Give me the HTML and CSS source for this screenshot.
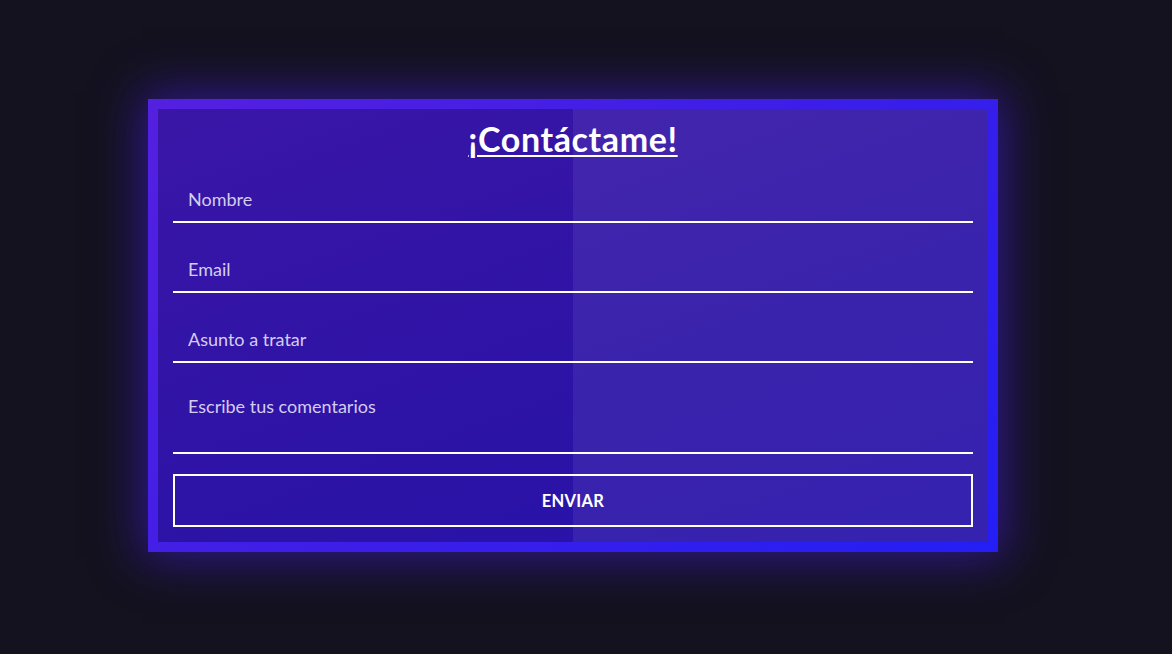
FILE: index.html
```html
<!DOCTYPE html>
<html lang="es">
<head>
<meta charset="utf-8">
<title>Contacto</title>
<link rel="stylesheet" href="styles.css">
</head>
<body>
<main class="page">
  <div class="frame">
    <form class="card">
      <h1 class="title">¡Contáctame!</h1>
      <input class="field" type="text" placeholder="Nombre">
      <input class="field" type="email" placeholder="Email">
      <input class="field" type="text" placeholder="Asunto a tratar">
      <textarea class="field area" placeholder="Escribe tus comentarios"></textarea>
      <button class="send" type="button">ENVIAR</button>
    </form>
  </div>
</main>
</body>
</html>
```
FILE: styles.css
```css
* { box-sizing: border-box; }
html, body { margin: 0; height: 100%; }
body {
  background: #14121f;
  font-family: "Lato", "Open Sans", sans-serif;
  overflow: hidden;
}
.page {
  padding: 99px 0 0 148px;
}
.frame {
  width: 850px;
  padding: 10px;
  background: linear-gradient(135deg, #5420e0 0%, #3d1ee8 50%, #241ef5 100%);
  box-shadow: 0 0 45px 6px rgba(70, 30, 230, 0.55);
}
.card {
  position: relative;
  display: flex;
  flex-direction: column;
  padding: 10px 15px 15px;
  background: linear-gradient(160deg, #3a16a6 0%, #2c13a6 60%, #2512aa 100%);
}
.card::after {
  content: "";
  position: absolute;
  top: 0; right: 0; bottom: 0;
  width: 50%;
  background: rgba(255, 255, 255, 0.07);
  pointer-events: none;
}
.title {
  margin: 0 0 13px;
  font-size: 34px;
  line-height: 40px;
  font-weight: 700;
  letter-spacing: 0.6px;
  color: #fff;
  text-align: center;
  text-decoration: underline;
  text-decoration-thickness: 2px;
  text-underline-offset: 3px;
}
.field {
  display: block;
  width: 100%;
  height: 51px;
  margin: 0 0 19px;
  padding: 4px 15px 0;
  background: transparent;
  border: 0;
  border-bottom: 2px solid #fff;
  color: #fff;
  font-family: inherit;
  font-size: 18px;
  outline: none;
  resize: none;
}
.field::placeholder { color: #d4cdef; opacity: 1; }
.area {
  height: 72px;
  padding-top: 13px;
  margin-bottom: 20px;
}
.send {
  height: 53px;
  background: transparent;
  border: 2px solid #fff;
  color: #fff;
  font-family: inherit;
  font-size: 16.5px;
  font-weight: 700;
  letter-spacing: 0.3px;
}
```
